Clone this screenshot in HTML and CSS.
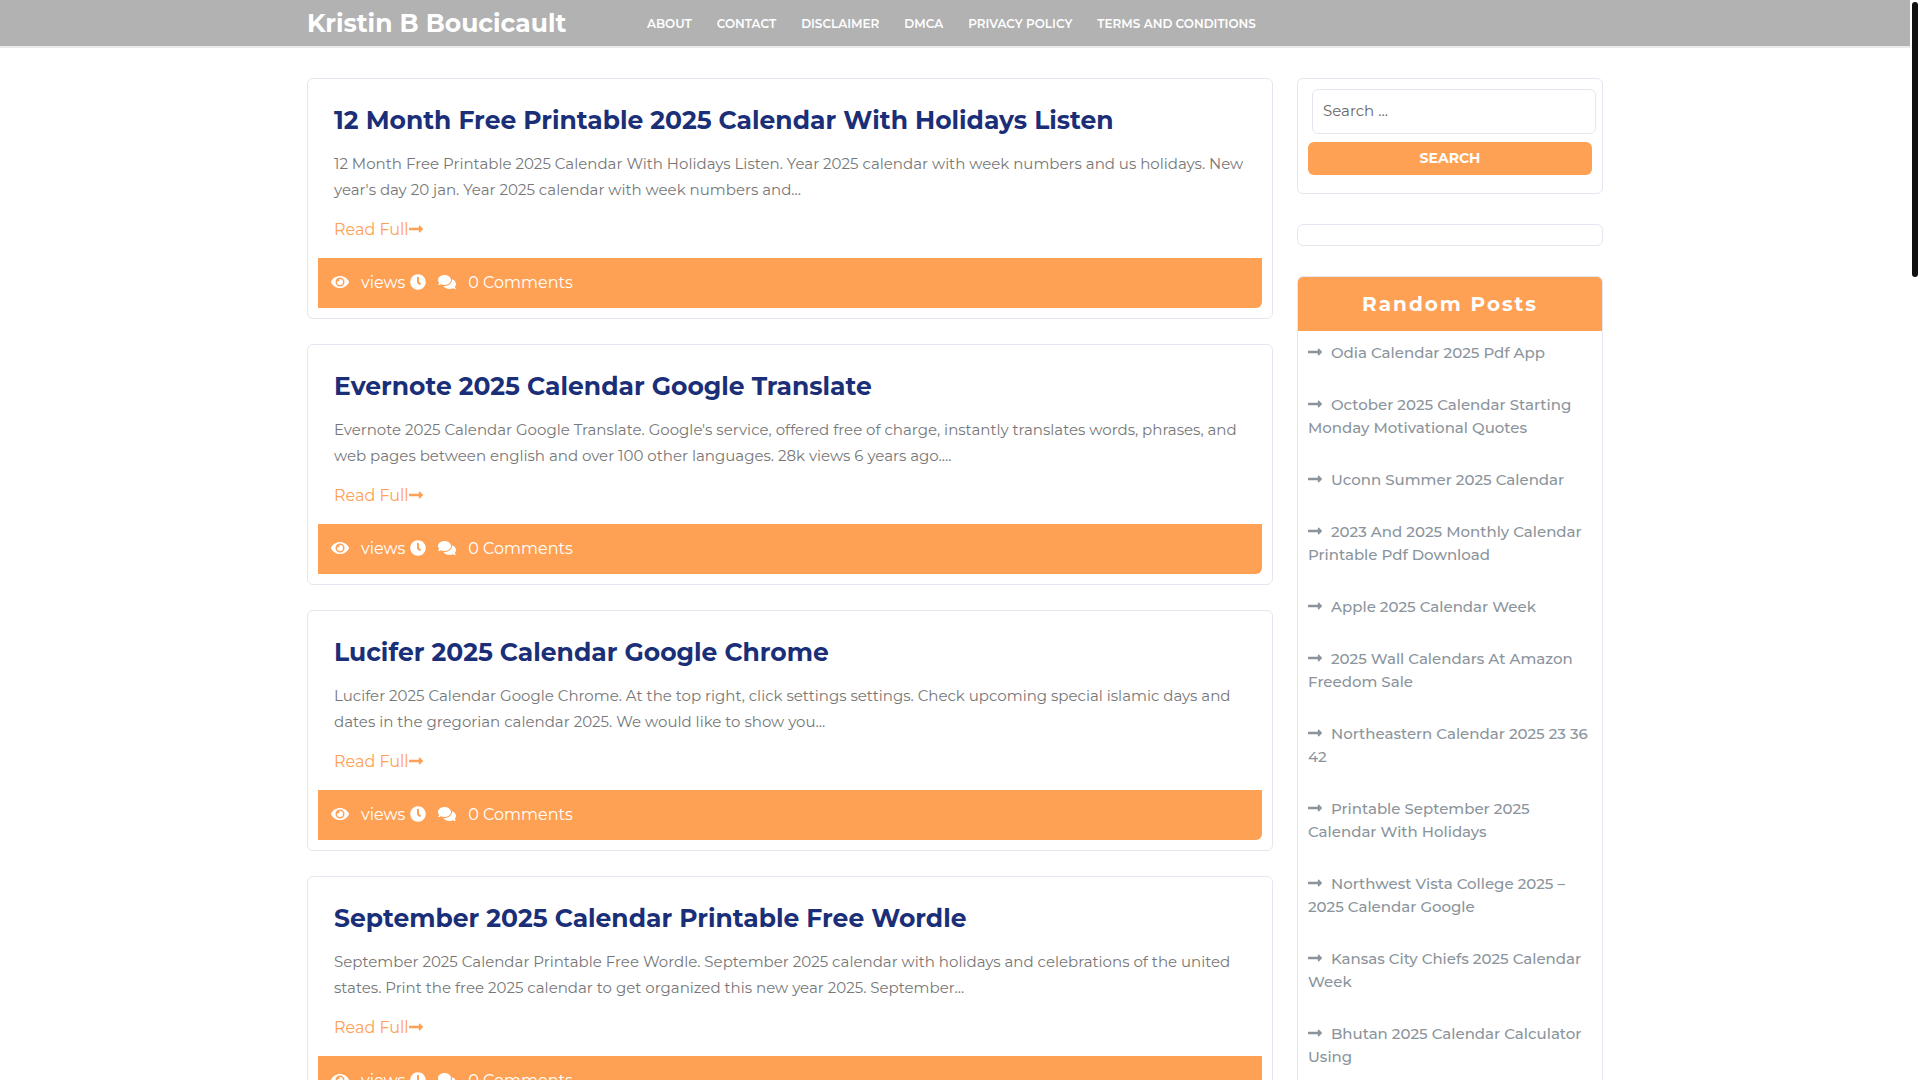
FILE: index.html
```html
<!DOCTYPE html>
<html lang="en">
<head>
    <meta charset="UTF-8">
    <meta name="viewport" content="width=device-width, initial-scale=1.0">
    <title>Kristin B Boucicault</title>
    <link rel="stylesheet" href="styles.css">
</head>
<body>
    <!-- Icons -->
    <svg class="sprite" aria-hidden="true">
        <symbol id="arrow" viewBox="0 0 448 512"><path d="M313.941 216H12c-6.627 0-12 5.373-12 12v56c0 6.627 5.373 12 12 12h301.941v46.059c0 21.382 25.851 32.09 40.971 16.971l86.059-86.059c9.373-9.373 9.373-24.569 0-33.941l-86.059-86.059c-15.119-15.119-40.971-4.411-40.971 16.971V216z"/></symbol>
        <symbol id="eye" viewBox="0 0 576 512"><path d="M572.52 241.4C518.29 135.59 410.93 64 288 64S57.68 135.64 3.48 241.41a32.35 32.35 0 0 0 0 29.19C57.71 376.41 165.07 448 288 448s230.32-71.64 284.52-177.41a32.35 32.35 0 0 0 0-29.19zM288 400a144 144 0 1 1 144-144 143.93 143.93 0 0 1-144 144zm0-240a95.31 95.31 0 0 0-25.31 3.79 47.85 47.85 0 0 1-66.9 66.9A95.78 95.78 0 1 0 288 160z"/></symbol>
        <symbol id="clock" viewBox="0 0 512 512"><path d="M256,8C119,8,8,119,8,256S119,504,256,504,504,393,504,256,393,8,256,8Zm92.49,313h0l-20,25a16,16,0,0,1-22.49,2.5h0l-67-49.72a40,40,0,0,1-15-31.23V112a16,16,0,0,1,16-16h32a16,16,0,0,1,16,16V256l58,42.5A16,16,0,0,1,348.49,321Z"/></symbol>
        <symbol id="comments" viewBox="0 0 576 512"><path d="M416 192c0-88.4-93.1-160-208-160S0 103.6 0 192c0 34.3 14.1 65.9 38 92-13.4 30.2-35.5 54.2-35.8 54.5-2.2 2.3-2.8 5.7-1.5 8.7S4.8 352 8 352c36.6 0 66.9-12.3 88.7-25 32.2 15.7 70.3 25 111.3 25 114.9 0 208-71.6 208-160zm122 220c23.9-26 38-57.7 38-92 0-66.9-53.5-124.2-129.3-148.1.9 6.6 1.3 13.3 1.3 20.1 0 105.9-107.7 192-240 192-10.8 0-21.3-.8-31.7-1.9C207.8 439.6 281.8 480 368 480c41 0 79.1-9.2 111.3-25 21.8 12.7 52.1 25 88.7 25 3.2 0 6.1-1.9 7.3-4.8 1.3-2.9.7-6.3-1.5-8.7-.3-.3-22.4-24.2-35.8-54.5z"/></symbol>
    </svg>

    <header class="site-header">
        <div class="container header-inner">
            <a class="logo" href="#">Kristin B Boucicault</a>
            <nav class="main-nav">
                <a href="#">About</a>
                <a href="#">Contact</a>
                <a href="#">Disclaimer</a>
                <a href="#">DMCA</a>
                <a href="#">Privacy Policy</a>
                <a href="#">Terms and Conditions</a>
            </nav>
        </div>
    </header>

    <div class="container content">
        <main class="posts">
            <article class="card post">
                <div class="post-body">
                    <h2><a href="#">12 Month Free Printable 2025 Calendar With Holidays Listen</a></h2>
                    <p>12 Month Free Printable 2025 Calendar With Holidays Listen. Year 2025 calendar with week numbers and us holidays. New<br>year's day 20 jan. Year 2025 calendar with week numbers and…</p>
                    <a class="read-more" href="#">Read Full<svg class="icon arrow"><use href="#arrow"/></svg></a>
                </div>
                <div class="post-meta">
                    <svg class="icon wide"><use href="#eye"/></svg>
                    <span class="views">views</span>
                    <svg class="icon"><use href="#clock"/></svg>
                    <svg class="icon wide talk"><use href="#comments"/></svg>
                    <a href="#">0 Comments</a>
                </div>
            </article>

            <article class="card post">
                <div class="post-body">
                    <h2><a href="#">Evernote 2025 Calendar Google Translate</a></h2>
                    <p>Evernote 2025 Calendar Google Translate. Google's service, offered free of charge, instantly translates words, phrases, and<br>web pages between english and over 100 other languages. 28k views 6 years ago.…</p>
                    <a class="read-more" href="#">Read Full<svg class="icon arrow"><use href="#arrow"/></svg></a>
                </div>
                <div class="post-meta">
                    <svg class="icon wide"><use href="#eye"/></svg>
                    <span class="views">views</span>
                    <svg class="icon"><use href="#clock"/></svg>
                    <svg class="icon wide talk"><use href="#comments"/></svg>
                    <a href="#">0 Comments</a>
                </div>
            </article>

            <article class="card post">
                <div class="post-body">
                    <h2><a href="#">Lucifer 2025 Calendar Google Chrome</a></h2>
                    <p>Lucifer 2025 Calendar Google Chrome. At the top right, click settings settings. Check upcoming special islamic days and<br>dates in the gregorian calendar 2025. We would like to show you…</p>
                    <a class="read-more" href="#">Read Full<svg class="icon arrow"><use href="#arrow"/></svg></a>
                </div>
                <div class="post-meta">
                    <svg class="icon wide"><use href="#eye"/></svg>
                    <span class="views">views</span>
                    <svg class="icon"><use href="#clock"/></svg>
                    <svg class="icon wide talk"><use href="#comments"/></svg>
                    <a href="#">0 Comments</a>
                </div>
            </article>

            <article class="card post">
                <div class="post-body">
                    <h2><a href="#">September 2025 Calendar Printable Free Wordle</a></h2>
                    <p>September 2025 Calendar Printable Free Wordle. September 2025 calendar with holidays and celebrations of the united<br>states. Print the free 2025 calendar to get organized this new year 2025. September…</p>
                    <a class="read-more" href="#">Read Full<svg class="icon arrow"><use href="#arrow"/></svg></a>
                </div>
                <div class="post-meta">
                    <svg class="icon wide"><use href="#eye"/></svg>
                    <span class="views">views</span>
                    <svg class="icon"><use href="#clock"/></svg>
                    <svg class="icon wide talk"><use href="#comments"/></svg>
                    <a href="#">0 Comments</a>
                </div>
            </article>
        </main>

        <aside class="sidebar">
            <form class="card search-form" onsubmit="return false">
                <input type="search" placeholder="Search …" aria-label="Search">
                <button type="submit">Search</button>
            </form>

            <div class="card empty-widget"></div>

            <section class="card random-posts">
                <h3>Random Posts</h3>
                <ul>
                    <li><a href="#"><svg class="icon arrow"><use href="#arrow"/></svg>Odia Calendar 2025 Pdf App</a></li>
                    <li><a href="#"><svg class="icon arrow"><use href="#arrow"/></svg>October 2025 Calendar Starting<br>Monday Motivational Quotes</a></li>
                    <li><a href="#"><svg class="icon arrow"><use href="#arrow"/></svg>Uconn Summer 2025 Calendar</a></li>
                    <li><a href="#"><svg class="icon arrow"><use href="#arrow"/></svg>2023 And 2025 Monthly Calendar<br>Printable Pdf Download</a></li>
                    <li><a href="#"><svg class="icon arrow"><use href="#arrow"/></svg>Apple 2025 Calendar Week</a></li>
                    <li><a href="#"><svg class="icon arrow"><use href="#arrow"/></svg>2025 Wall Calendars At Amazon<br>Freedom Sale</a></li>
                    <li><a href="#"><svg class="icon arrow"><use href="#arrow"/></svg>Northeastern Calendar 2025 23 36<br>42</a></li>
                    <li><a href="#"><svg class="icon arrow"><use href="#arrow"/></svg>Printable September 2025<br>Calendar With Holidays</a></li>
                    <li><a href="#"><svg class="icon arrow"><use href="#arrow"/></svg>Northwest Vista College 2025 –<br>2025 Calendar Google</a></li>
                    <li><a href="#"><svg class="icon arrow"><use href="#arrow"/></svg>Kansas City Chiefs 2025 Calendar<br>Week</a></li>
                    <li><a href="#"><svg class="icon arrow"><use href="#arrow"/></svg>Bhutan 2025 Calendar Calculator<br>Using</a></li>
                </ul>
            </section>
        </aside>
    </div>

    <div class="scroll-thumb"></div>
</body>
</html>
```
FILE: styles.css
```css
* {
    box-sizing: border-box;
}

body {
    height: 100vh;
    margin: 0;
    padding-right: 10px;
    overflow: hidden;
    background-color: #fff;
    color: #777;
    font-family: Montserrat, Inter, sans-serif;
    font-size: 15px;
    font-weight: 400;
}

a {
    color: inherit;
    text-decoration: none;
}

h2, h3, p, ul {
    margin: 0;
    padding: 0;
}

.sprite {
    display: none;
}

.icon {
    flex: none;
    width: 16px;
    height: 16px;
    fill: currentColor;
}

.icon.wide {
    width: 18px;
}

.icon.arrow {
    width: 14px;
    vertical-align: -2px;
}

.container {
    max-width: 1296px;
    margin: 0 auto;
}

/* Header */
.site-header {
    background-color: #b2b2b2;
    border-bottom: 2px solid #ebebeb;
}

.header-inner {
    display: flex;
    align-items: center;
    height: 46px;
    color: #fff;
}

.logo {
    width: 340px;
    font-size: 25px;
    font-weight: 700;
}

.main-nav {
    display: flex;
    gap: 25px;
    font-size: 12px;
    font-weight: 600;
    text-transform: uppercase;
}

/* Layout */
.content {
    display: flex;
    align-items: flex-start;
    gap: 24px;
    padding-top: 30px;
}

.posts {
    display: flex;
    flex: 1;
    flex-direction: column;
    gap: 25px;
}

.sidebar {
    display: flex;
    flex-direction: column;
    gap: 30px;
    width: 306px;
}

.card {
    border: 1px solid #e6e6f0;
    border-radius: 6px;
}

/* Posts */
.post {
    padding: 10px;
}

.post-body {
    padding: 15px 16px 16px;
}

.post h2 {
    margin-bottom: 15px;
    color: #1a2f77;
    font-size: 25px;
    font-weight: 700;
    line-height: 32px;
}

.post p {
    margin-bottom: 15px;
    line-height: 26px;
    white-space: nowrap;
}

.read-more {
    display: block;
    color: #ffa155;
    font-size: 16px;
    font-weight: 400;
    line-height: 24px;
}

.post-meta {
    display: flex;
    align-items: center;
    height: 50px;
    padding: 0 13px 2px;
    border-bottom-right-radius: 6px;
    background-color: #ffa155;
    color: #fff;
    font-size: 16px;
    font-weight: 400;
}

.views {
    margin: 0 5px 0 12px;
}

.talk {
    margin: 0 12px;
}

/* Sidebar */
.search-form {
    height: 116px;
    padding: 10px;
}

.search-form input {
    display: block;
    width: 100%;
    height: 45px;
    margin: 0 0 8px 4px;
    padding: 0 10px 2px;
    border: 1px solid #e6e6f0;
    border-radius: 6px;
    background-color: #fff;
    font-family: inherit;
    font-size: 15px;
}

.search-form input::placeholder {
    color: #666;
}

.search-form button {
    width: 100%;
    height: 33px;
    padding: 0 0 2px;
    border: none;
    border-radius: 6px;
    background-color: #ffa155;
    color: #fff;
    font-family: inherit;
    font-size: 14px;
    font-weight: 700;
    text-transform: uppercase;
    cursor: pointer;
}

.empty-widget {
    height: 22px;
}

.random-posts {
    overflow: hidden;
}

.random-posts h3 {
    background-color: #ffa155;
    color: #fff;
    font-size: 20px;
    font-weight: 700;
    letter-spacing: 2px;
    line-height: 54px;
    text-align: center;
}

.random-posts ul {
    padding: 10px 10px 0;
    list-style: none;
}

.random-posts li {
    padding-bottom: 29px;
    color: #8b949c;
    font-weight: 500;
    line-height: 23px;
    white-space: nowrap;
}

.random-posts .icon {
    margin-right: 9px;
}

/* Scroll bar */
.scroll-thumb {
    position: fixed;
    top: 2px;
    right: 2px;
    width: 6px;
    height: 275px;
    border-radius: 3px;
    background-color: #111;
}
```
